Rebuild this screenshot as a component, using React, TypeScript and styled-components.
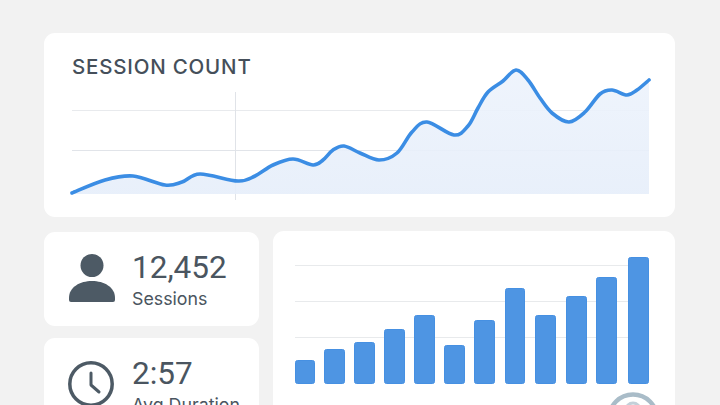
import styled, { createGlobalStyle } from "styled-components";

const GlobalStyle = createGlobalStyle`
    html, body {
        margin: 0;
        width: 720px;
        height: 405px;
        overflow: hidden;
        background: #f2f2f2;
    }
    body {
        font-family: "Inter", "Liberation Sans", sans-serif;
        color: #4a5560;
    }
`;

const Page = styled.main`
    display: flex;
    flex-direction: column;
    gap: 15px;
    width: 631px;
    height: 372px;
    padding: 33px 0 0 44px;
    overflow: hidden;
`;

const Card = styled.section`
    background: #fff;
    border-radius: 11px;
    box-sizing: border-box;
    flex: none;
`;

const TrendCard = styled(Card)`
    height: 184px;
    padding: 20px 26px 0 28px;
`;

const Title = styled.h2`
    margin: 0;
    font-size: 20.5px;
    line-height: 27px;
    font-weight: 500;
    letter-spacing: 0.8px;
    color: #454f5a;
`;

const Bottom = styled.div`
    display: grid;
    grid-template-columns: 215px 402px;
    gap: 14px;
    flex: none;
`;

const Stats = styled.div`
    display: flex;
    flex-direction: column;
    gap: 12px;
`;

const StatCard = styled(Card)`
    display: flex;
    align-items: center;
    gap: 16px;
    height: 94px;
    padding-left: 24px;
`;

const StatIcon = styled.svg`
    width: 48px;
    height: 48px;
    flex: none;
    overflow: visible;
`;

const StatText = styled.div`
    padding-top: 3px;
`;

const StatValue = styled.div`
    font-family: "Roboto", "Liberation Sans", sans-serif;
    font-size: 31.5px;
    line-height: 36px;
    color: #4a5560;
`;

const StatLabel = styled.div`
    margin-top: 1px;
    font-size: 17.8px;
    line-height: 24px;
    color: #4a5560;
`;

const BarsCard = styled(Card)`
    height: 200px;
    margin-top: -1px;
    padding: 26px 26px 0 22px;
`;

const ChartSvg = styled.svg`
    display: block;
    overflow: visible;
`;

const linePoints = [
    [72, 193], [105, 180], [133, 176], [165, 185], [182, 182], [200, 174], [238, 181], [255, 176],
    [273, 165], [293, 159], [313, 165], [323, 160], [333, 150], [344, 146], [360, 153], [379, 160],
    [397, 153], [412, 132], [427, 122], [454, 135], [468, 126], [478, 108], [488, 92], [503, 81],
    [516, 70], [528, 80], [540, 98], [552, 113], [569, 122], [585, 112], [600, 94], [612, 90],
    [627, 95], [637, 90], [649, 80],
];

// Catmull-Rom through the points, shifted into the svg's own coordinates
function smoothPath(points: number[][], dx: number, dy: number) {
    const p = points.map(([x, y]) => [x - dx, y - dy]);
    let d = `M${p[0][0]} ${p[0][1]}`;
    for (let i = 0; i < p.length - 1; i++) {
        const a = p[Math.max(i - 1, 0)];
        const b = p[i];
        const c = p[i + 1];
        const e = p[Math.min(i + 2, p.length - 1)];
        const c1x = b[0] + (c[0] - a[0]) / 6;
        const c1y = b[1] + (c[1] - a[1]) / 6;
        const c2x = c[0] - (e[0] - b[0]) / 6;
        const c2y = c[1] - (e[1] - b[1]) / 6;
        d += ` C${c1x.toFixed(1)} ${c1y.toFixed(1)} ${c2x.toFixed(1)} ${c2y.toFixed(1)} ${c[0]} ${c[1]}`;
    }
    return d;
}

function TrendChart() {
    const line = smoothPath(linePoints, 72, 80);
    return (
        <ChartSvg width="577" height="125" viewBox="0 0 577 125">
            <defs>
                <linearGradient id="area" x1="0" y1="0" x2="0" y2="1">
                    <stop offset="0" stopColor="#edf3fc" />
                    <stop offset="1" stopColor="#e6eefa" />
                </linearGradient>
            </defs>
            <line x1="0" x2="577" y1="30.5" y2="30.5" stroke="#e8eaed" />
            <line x1="0" x2="577" y1="70.5" y2="70.5" stroke="#e1e4e9" />
            <line x1="163.5" x2="163.5" y1="12" y2="120" stroke="#e0e3e8" />
            <path d={`${line} L577 114 L0 114 Z`} fill="url(#area)" fillOpacity="0.9" />
            <path d={line} fill="none" stroke="#3b8de4" strokeWidth="3.6" strokeLinecap="round" strokeLinejoin="round" />
        </ChartSvg>
    );
}

const bars = [
    { x: 295, w: 20, top: 360 },
    { x: 324, w: 21, top: 349 },
    { x: 354, w: 21, top: 342 },
    { x: 384, w: 21, top: 329 },
    { x: 414, w: 21, top: 315 },
    { x: 444, w: 21, top: 345 },
    { x: 474, w: 21, top: 320 },
    { x: 505, w: 20, top: 288 },
    { x: 535, w: 21, top: 315 },
    { x: 566, w: 21, top: 296 },
    { x: 596, w: 21, top: 277 },
    { x: 628, w: 21, top: 257 },
];

function BarChart() {
    // svg origin sits at page (295, 257)
    return (
        <ChartSvg width="354" height="148" viewBox="0 0 354 148">
            {[8.5, 44.5, 80.5].map((y) => (
                <line key={y} x1="0" x2="333" y1={y} y2={y} stroke="#e8eaec" />
            ))}
            {bars.map((b) => (
                <rect
                    key={b.x}
                    x={b.x - 295 + 0.5}
                    y={b.top - 257 + 0.5}
                    width={b.w - 1}
                    height={383.5 - b.top - 0.5}
                    rx="2"
                    fill="#4e95e3"
                    stroke="#4690e2"
                />
            ))}
            <circle cx="338" cy="161.5" r="24" fill="none" stroke="#a9bcc8" strokeWidth="4.5" />
            <circle cx="338" cy="153" r="7" fill="none" stroke="#c3d0d9" strokeWidth="3" />
        </ChartSvg>
    );
}

export default function App() {
    return (
        <>
            <GlobalStyle />
            <Page>
                <TrendCard>
                    <Title>SESSION COUNT</Title>
                    <TrendChart />
                </TrendCard>
                <Bottom>
                    <Stats>
                        <StatCard>
                            <StatIcon viewBox="0 0 48 48">
                                <circle cx="24" cy="10.5" r="11.5" fill="#4d5a65" />
                                <path d="M1 43 C1 32 12 26 24 26 C36 26 47 32 47 43 V45 Q47 47 45 47 H3 Q1 47 1 45 Z" fill="#4d5a65" />
                            </StatIcon>
                            <StatText>
                                <StatValue>12,452</StatValue>
                                <StatLabel>Sessions</StatLabel>
                            </StatText>
                        </StatCard>
                        <StatCard>
                            <StatIcon viewBox="0 0 48 48">
                                <circle cx="23" cy="23" r="21.2" fill="none" stroke="#4d5a65" strokeWidth="3.5" />
                                <path d="M23 12 V24 L31 31" fill="none" stroke="#4d5a65" strokeWidth="3" strokeLinecap="round" strokeLinejoin="round" />
                            </StatIcon>
                            <StatText>
                                <StatValue>2:57</StatValue>
                                <StatLabel>Avg Duration</StatLabel>
                            </StatText>
                        </StatCard>
                    </Stats>
                    <BarsCard>
                        <BarChart />
                    </BarsCard>
                </Bottom>
            </Page>
        </>
    );
}
